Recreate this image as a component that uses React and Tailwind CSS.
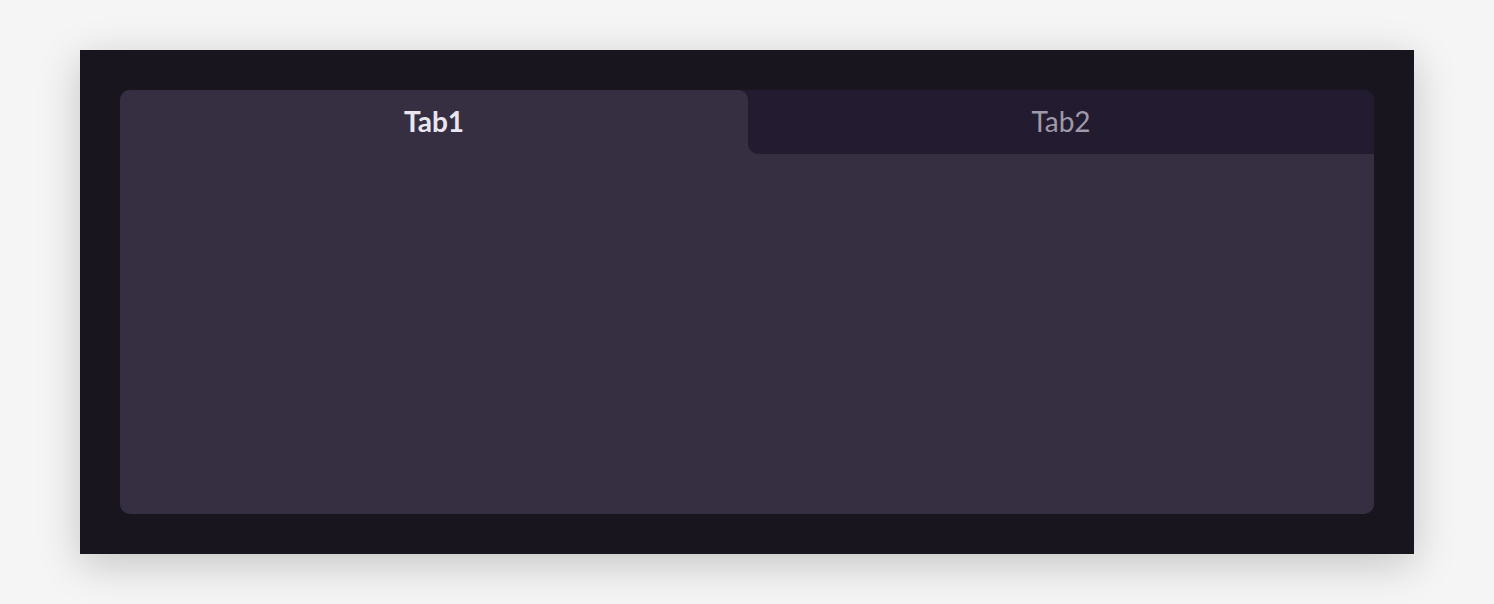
import React, { useState } from "react";

export default function App() {
  const [active, setActive] = useState(0);
  const tabs = ["Tab1", "Tab2"];
  return (
    <div className="min-h-[604px] w-full bg-[#f5f5f5] px-[80px] pt-[50px] pb-[50px]" style={{ fontFamily: "Lato, 'Open Sans', sans-serif" }}>
      <div className="bg-[#18151f] p-[40px] shadow-[0_10px_40px_rgba(0,0,0,0.2)]">
        <div className="h-[424px] rounded-[10px] overflow-hidden bg-[#362f42] flex flex-col">
          <div className="flex h-[64px] bg-[linear-gradient(to_bottom,#231c30_50%,#362f42_50%)]">
            <button
              onClick={() => setActive(0)}
              className="w-[628px] flex items-center justify-center pb-[2px] rounded-tr-[10px] bg-[#362f42] text-[28px] leading-none font-bold text-[#e9e6ef]"
            >
              {tabs[0]}
            </button>
            <button
              onClick={() => setActive(1)}
              className="flex-1 flex items-center justify-center pb-[2px] rounded-bl-[10px] rounded-tr-[10px] bg-[#231c30] text-[28px] leading-none font-normal text-[#9f99a9]"
            >
              {tabs[1]}
            </button>
          </div>
          <div className="flex-1" />
        </div>
      </div>
    </div>
  );
}
